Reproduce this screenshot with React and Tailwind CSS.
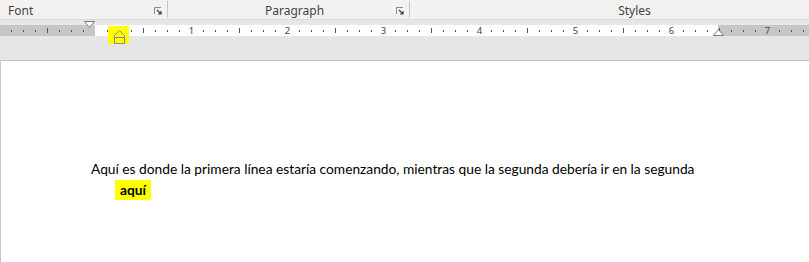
import React from "react";

const ORIGIN = 95;
const STEP = 12;

function Launcher() {
   return (
      <svg className="w-[8px] h-[8px]" viewBox="0 0 8 8" fill="none">
         <path d="M0.5 7V0.5H7" stroke="#8a8a8a" strokeWidth="1" />
         <path d="M3 3L7 7M4 7H7V4" stroke="#444" strokeWidth="1.2" />
      </svg>
   );
}

function Ruler() {
   const ticks = [];
   for (let i = -7; i <= 59; i++) {
      const x = ORIGIN + i * STEP;
      const n = ((i % 8) + 8) % 8;
      if (n === 0) {
         const label = Math.abs(i / 8);
         if (label !== 0) {
            ticks.push(
               <text key={i} x={x + 0.5} y={34.5} textAnchor="middle" fontSize="9.5" fill="#444" fontFamily="'Noto Sans', sans-serif">
                  {label}
               </text>
            );
         }
      } else if (n === 4) {
         ticks.push(<rect key={i} x={x} y={29} width={1} height={5} fill="#555" />);
      } else {
         ticks.push(<rect key={i} x={x} y={31} width={1} height={2} fill="#555" />);
      }
   }
   return (
      <svg width="809" height="41" viewBox="0 21 809 41" className="block">
         <rect x="0" y="26" width="95" height="11" fill="#c6c6c6" />
         <rect x="95" y="26" width="623" height="11" fill="#ffffff" />
         <rect x="718" y="26" width="91" height="11" fill="#c6c6c6" />
         {ticks}
         {/* first line indent */}
         <path d="M84.5 22.5H94.5L89.5 28.5Z" fill="#fff" stroke="#777" />
         {/* hanging indent, highlighted */}
         <rect x="108" y="27" width="21" height="18" fill="#ffff00" />
         <path d="M114.5 36.5L119.5 31.5L124.5 36.5V44.5H114.5Z" fill="none" stroke="#888" />
         <path d="M114.5 38.5H124.5" stroke="#888" />
         {/* right indent */}
         <path d="M713.5 36.5L718.5 30.5L723.5 36.5Z" fill="#fff" stroke="#777" />
      </svg>
   );
}

export default function App() {
   return (
      <div className="w-[809px] h-[262px] overflow-hidden bg-white flex flex-col" style={{ fontFamily: "'Noto Sans', sans-serif" }}>
         <div className="h-[20px] bg-[#f3f2f1] border-b border-[#dadada] flex text-[12px] text-[#444] leading-none">
            <div className="w-[168px] flex items-center justify-between pl-[8px] pr-[5px] border-r border-[#c8c6c4] h-[17px] mt-px pt-[3px]">
               <span>Font</span>
               <Launcher />
            </div>
            <div className="w-[242px] flex items-center border-r border-[#c8c6c4] h-[17px] mt-px pt-[3px]">
               <span className="ml-[97px]">Paragraph</span>
               <span className="ml-auto mr-[5px]"><Launcher /></span>
            </div>
            <div className="flex-1 flex items-center justify-center pl-[50px] h-[17px] mt-px pt-[3px]">
               <span>Styles</span>
            </div>
         </div>
         <div className="h-[41px] bg-[#e6e6e6] border-b border-[#c6c6c6]">
            <Ruler />
         </div>
         <div className="flex-1 bg-white border-l border-[#c6c6c6] pt-[98px] text-[13.75px] text-black leading-[20px]" style={{ fontFamily: "Lato, sans-serif" }}>
            <p className="pl-[90px]">Aquí es donde la primera línea estaría comenzando, mientras que la segunda debería ir en la segunda</p>
            <p className="pl-[114px] mt-px">
               <span className="bg-[#ffff00] font-bold px-[5px] pt-[1px] pb-[2px]">aquí</span>
            </p>
         </div>
      </div>
   );
}
